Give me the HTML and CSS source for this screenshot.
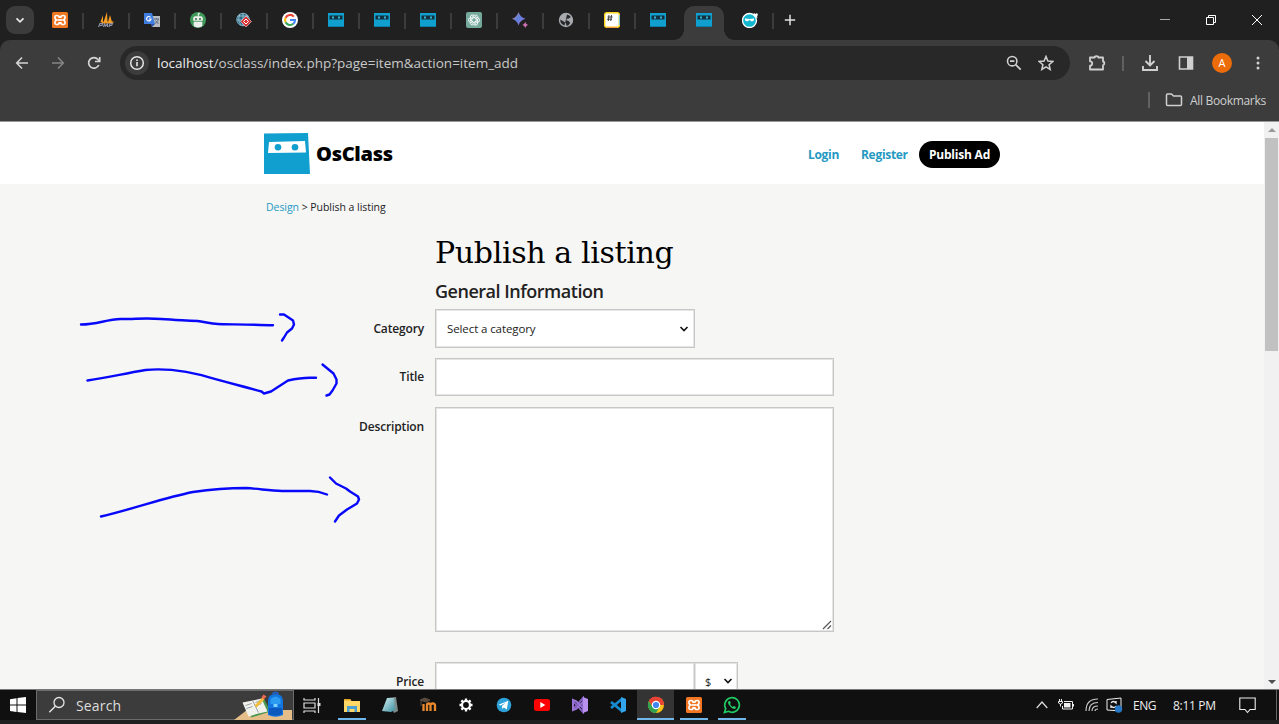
FILE: index.html
```
<!DOCTYPE html>
<html lang="en">
<head>
<meta charset="utf-8">
<title>Publish a listing - OsClass</title>
<link rel="stylesheet" href="styles.css">
</head>
<body>
<svg class="defs" aria-hidden="true">
  <defs>
    <linearGradient id="spark" x1="0" y1="0" x2="1" y2="1"><stop offset="0" stop-color="#e8798a"/><stop offset=".45" stop-color="#5b83e0"/><stop offset="1" stop-color="#a56bd0"/></linearGradient>
    <linearGradient id="note" x1="0" y1="0" x2="1" y2="1"><stop offset="0" stop-color="#d5f1f4"/><stop offset="1" stop-color="#3c8fa0"/></linearGradient>
    <symbol id="os" viewBox="0 0 16 16"><path fill="#10a0cf" d="M0 1h16v14H0z"/><path fill="#12303d" d="M1.500 3.500h13v4h-13z"/><path fill="#0b7ea6" d="M0 14h16v1H0z"/><path fill="#39b3d8" d="M4 4.500h2v2H4zM10 4.500h2v2h-2z"/></symbol>
    <symbol id="xampp" viewBox="0 0 16 16"><rect width="16" height="16" rx="1.500" fill="#f37623"/><path d="M4.800 3.500Q2.500 3.500 3 6q.2 1.300 1.500 2Q3.200 8.700 3 10q-.5 2.500 1.800 2.500 2.200 0 2.400-1.700h1.600q.2 1.700 2.400 1.700 2.300 0 1.800-2.500-.2-1.300-1.500-2Q12.800 7.300 13 6q.5-2.500-1.800-2.500Q9 3.500 8.800 5.200H7.200Q7 3.500 4.800 3.500z" fill="none" stroke="#fff" stroke-width="1.700"/><path d="M5.500 8h5" stroke="#fff" stroke-width="1.700"/></symbol>
  </defs>
</svg>

<header class="browser">
  <div class="tabstrip">
    <button class="tab-search"><svg width="16" height="16" viewBox="0 0 16 16"><path d="M4.500 6.300 8 9.800l3.500-3.500" fill="none" stroke="#e8e8e8" stroke-width="1.700"/></svg></button>
    <div class="tabs">
      <span class="tab"><svg><use href="#xampp"/></svg></span>
      <span class="tab"><svg viewBox="0 0 16 16"><path fill="#f59b23" d="M2.500 10 5 3v7zM5.500 10l3.500-10 .5 10zM10 10l2-7 2 7zM1 11.500l5-2H16l-2 2z"/><path d="m.5 15 1.500-3.500h2.500l-.5 2H2m3.500 1.500 1-3 1 2 2-2v3m1.500 0 1-3.500h2.500l-1 2H12" fill="none" stroke="#8d91a8" stroke-width="1.200"/></svg></span>
      <span class="tab"><svg viewBox="0 0 16 16"><path fill="#b9bdc2" d="M6 4h10v11H8z"/><path d="M10 7h5m-2.500-1v1m2 0c-.5 2-2 3.500-3.500 4.500m.5-3 3 3.500" stroke="#596a82" fill="none"/><path fill="#3f7de0" d="M0 1h8l3 11H0z"/><path fill="#2851a5" d="M7 12h4l-3 3z"/><path d="M6.500 5.300a2.200 2.200 0 1 0 .5 1.700H5" stroke="#fff" stroke-width="1.200" fill="none"/></svg></span>
      <span class="tab"><svg viewBox="0 0 16 16"><circle cx="8" cy="8" r="8" fill="#3f9958"/><path d="M8 5V1.500l2-.5M3.500 8.500V6q0-1.500 2-1.500h5q2 0 2 1.500v2.500zM4 10h8v4q-4 2.500-8 0z" fill="#eee" stroke="#eee" stroke-width=".6"/><circle cx="6" cy="7" r="1" fill="#286c3a"/><circle cx="10" cy="7" r="1" fill="#286c3a"/></svg></span>
      <span class="tab"><svg viewBox="0 0 16 16"><circle cx="7" cy="7.500" r="6.300" fill="#286985" stroke="#76a8bd"/><path d="M2 4h10M1 8h12M7 1v13M4 2q-3 6 1 11m5-11q3 3 1 7" stroke="#a9cbd7" fill="none" stroke-width=".8"/><path d="m10 4 5.500 5.500L10 15 4.500 9.500z" fill="#d63236" stroke="#fff" stroke-width=".5"/><path d="m10 7 2.500 2.500L10 12 7.500 9.500z" fill="none" stroke="#fff"/></svg></span>
      <span class="tab"><svg viewBox="0 0 16 16"><circle cx="8" cy="8" r="8" fill="#fff"/><g fill="none" stroke-width="2.100"><path d="M11.800 4.600A5 5 0 0 0 3.600 5.700" stroke="#ea4335"/><path d="M3.600 5.700a5 5 0 0 0 0 4.600" stroke="#fbbc05"/><path d="M3.600 10.300a5 5 0 0 0 7.700 1.500" stroke="#34a853"/><path d="M11.300 11.800A5 5 0 0 0 13 8H8" stroke="#4285f4"/></g></svg></span>
      <span class="tab"><svg><use href="#os"/></svg></span>
      <span class="tab"><svg><use href="#os"/></svg></span>
      <span class="tab"><svg><use href="#os"/></svg></span>
      <span class="tab"><svg viewBox="0 0 16 16"><rect width="16" height="16" rx="2" fill="#75a99c"/><g fill="none" stroke="#fff" stroke-width=".9"><path id="petal" d="M5.800 9.300V5.200L8.600 3.400a2.200 2.200 0 0 1 3.300 2.200"/><use href="#petal" transform="rotate(60 8 8)"/><use href="#petal" transform="rotate(120 8 8)"/><use href="#petal" transform="rotate(180 8 8)"/><use href="#petal" transform="rotate(240 8 8)"/><use href="#petal" transform="rotate(300 8 8)"/></g></svg></span>
      <span class="tab"><svg viewBox="0 0 16 16"><path fill="url(#spark)" d="M6.500 0Q8 5.300 13.500 6.800 8 8.200 6.500 13.500 5 8.200 0 6.800 5 5.300 6.500 0z"/><path fill="#cf72b5" d="M13.300 10q.6 2.200 2.700 3-2.100.7-2.700 3-.7-2.300-2.800-3 2.100-.8 2.800-3z"/></svg></span>
      <span class="tab"><svg viewBox="0 0 16 16"><circle cx="8" cy="8" r="7.200" fill="#a7abb0"/><path d="M9 2.500q3 .5 3.800 2.500l-2 1.500-2 .2-.6 1.600 2.500.7 1.500 2-2 2.500-1.700.3-.5-2.300L6 9.800 2.300 7.500q-.3 4.500 4.200 6" fill="#25272a"/></svg></span>
      <span class="tab"><svg viewBox="0 0 16 16"><rect x=".7" y=".7" width="14.600" height="14.600" rx="2" fill="#fff" stroke="#ffd51f" stroke-width="1.400"/><path d="M15.400 3v10" stroke="#67c7ee"/><path d="M3 15.400h10" stroke="#fa9446"/><path d="m5 3-.7 6M7.500 3l-.7 6M3.500 5h5M3 7.200h5" stroke="#333" stroke-width=".9"/></svg></span>
      <span class="tab before-active"><svg><use href="#os"/></svg></span>
      <span class="tab active"><i class="tab-shape"></i><svg><use href="#os"/></svg></span>
      <span class="tab"><svg viewBox="0 0 16 16"><circle cx="7.500" cy="8.500" r="7" fill="#14b8ce" stroke="#fff" stroke-width="1.300"/><path d="m11 3 1-2 1.500 1L15 1l1 2-1 1 .5 2-2-.5z" fill="#fff"/><path d="M3 6.500q4.500.8 9 0v1.700q-1.500 1.700-3 .8l-1.500-1L6 9q-1.500.9-3-.8z" fill="#fff"/></svg></span>
    </div>
    <button class="new-tab"><svg width="12" height="12" viewBox="0 0 12 12"><path d="M6 .8v10.400M.8 6h10.400" stroke="#e0e0e0" stroke-width="1.500"/></svg></button>
    <div class="window-buttons">
      <svg viewBox="0 0 12 12"><path d="M1 5.500h10" stroke="#aaa"/></svg>
      <svg viewBox="0 0 12 12"><path d="M1.500 3.500h7v7h-7zM3.500 3V1.500h7v7H9" fill="none" stroke="#fff"/></svg>
      <svg viewBox="0 0 12 12"><path d="m1 1 10 10M11 1 1 11" stroke="#fff"/></svg>
    </div>
  </div>

  <div class="toolbar">
    <nav class="nav">
      <svg viewBox="0 0 16 16"><path d="M14 8H3m5-5.500L2.700 8 8 13.500" fill="none" stroke="#d5d5d5" stroke-width="1.600"/></svg>
      <svg viewBox="0 0 16 16"><path d="M2 8h11M8 2.500 13.300 8 8 13.500" fill="none" stroke="#858585" stroke-width="1.600"/></svg>
      <svg viewBox="0 0 16 16"><path d="M12.800 10A5.300 5.300 0 1 1 12 4.500L13.500 6M13.700 2v4.500H9" fill="none" stroke="#d5d5d5" stroke-width="1.700"/></svg>
    </nav>
    <div class="omnibox">
      <span class="site-info"><svg width="16" height="16" viewBox="0 0 16 16"><circle cx="8" cy="8" r="6.300" fill="none" stroke="#e5e5e5" stroke-width="1.500"/><path d="M8 7v4.300M8 4.500V6" stroke="#e5e5e5" stroke-width="1.600"/></svg></span>
      <span class="url"><b>localhost</b>/osclass/index.php?page=item&amp;action=item_add</span>
      <svg class="lens" viewBox="0 0 16 16"><circle cx="6.200" cy="6.200" r="4.700" fill="none" stroke="#d0d0d0" stroke-width="1.600"/><path d="m9.700 9.700 5 5M4 6.200h4.400" stroke="#d0d0d0" stroke-width="1.700"/></svg>
      <svg class="star" viewBox="0 0 16 16"><path d="m8 1.500 1.900 4.600 4.900.4-3.700 3.200 1.100 4.800L8 11.900l-4.200 2.600 1.100-4.800L1.200 6.500l4.900-.4z" fill="none" stroke="#d0d0d0" stroke-width="1.500"/></svg>
    </div>
    <div class="actions">
      <svg class="ext" viewBox="0 0 18 18"><path d="M2 3.500h4.700a1.800 1.300 0 0 1 3.600 0H15v4a1.300 1.800 0 0 1 0 3.600v4.400H2v-3.800a2.200 2.200 0 0 0 0-4.400z" fill="none" stroke="#d0d0d0" stroke-width="1.800" stroke-linejoin="round"/></svg>
      <i></i>
      <svg class="down" viewBox="0 0 18 18"><path d="M9 1v10M4.500 7 9 11.500 13.500 7M2 12v4h14v-4" fill="none" stroke="#d0d0d0" stroke-width="1.900"/></svg>
      <svg class="panel" viewBox="0 0 16 16"><path d="M1.500 2h13v12h-13z" fill="none" stroke="#d0d0d0" stroke-width="1.600"/><path d="M9 2h5v12H9z" fill="#d0d0d0"/></svg>
      <span class="avatar">A</span>
      <svg class="dots" viewBox="0 0 4 16"><g fill="#d0d0d0"><circle cx="2" cy="3" r="1.500"/><circle cx="2" cy="8" r="1.500"/><circle cx="2" cy="13" r="1.500"/></g></svg>
    </div>
  </div>
  <div class="bookmarks"><i></i><svg width="18" height="14" viewBox="0 0 18 14"><path d="M1.500 2q0-1 1-1h4l2 2h7q1 0 1 1v7.500q0 1-1 1h-13q-1 0-1-1z" fill="none" stroke="#cfcfcf" stroke-width="1.500"/></svg><span>All Bookmarks</span></div>
</header>

<main class="viewport">
  <div class="page">
    <header class="site-header">
      <svg width="46" height="41" viewBox="0 0 46 41"><path d="m0 .5 44-.5 2 41H0z" fill="#109fcf"/><path d="m5 9 36-1 1 11.500-38 .5z" fill="#fff"/><circle cx="14" cy="14.300" r="3.300" fill="#109fcf"/><circle cx="31" cy="14.300" r="3.300" fill="#109fcf"/></svg>
      <span class="brand">OsClass</span>
      <nav class="site-nav"><a class="login">Login</a><a class="register">Register</a><a class="publish"><span>Publish Ad</span></a></nav>
    </header>
    <div class="breadcrumb"><a>Design</a> &gt; Publish a listing</div>
    <form class="listing">
      <h1><span>Publish a listing</span></h1>
      <h2><span>General Information</span></h2>
      <div class="row category"><label>Category</label><div class="field select"><span>Select a category</span><svg width="10" height="6" viewBox="0 0 10 6"><path d="m1.500 1 3.500 3.500L8.500 1" fill="none" stroke="#111" stroke-width="1.600"/></svg></div></div>
      <div class="row title"><label>Title</label><div class="field input"></div></div>
      <div class="row description"><label>Description</label><div class="field textarea"><svg width="10" height="10" viewBox="0 0 10 10"><path d="M1 9 9 1M5.500 9 9 5.500" stroke="#555" stroke-width="1.100"/></svg></div></div>
      <div class="row price"><label>Price</label><div class="field amount"></div><div class="field currency"><span>$</span><svg width="10" height="6" viewBox="0 0 10 6"><path d="m1.500 1 3.500 3.500L8.500 1" fill="none" stroke="#111" stroke-width="1.600"/></svg></div></div>
    </form>
    <svg class="ink" viewBox="0 0 400 250"><g fill="none" stroke="#0808fa" stroke-width="2.400" stroke-linecap="round" stroke-linejoin="round">
      <path d="M81 24.500c17 0 24-5 40-5.500 16 0 25-1.300 40 0 13 1 18 1 37 2 10 2 17 3.500 25 3.300 15 .2 35 .2 50 1"/>
      <path d="M280 14.500h4l6 4 3 2 1 4-2 4-5 4-3 5-2 3"/>
      <path d="M87.500 80.500c22-3 34-6.500 58-10.500 9-1 17-.8 26-.1 11 1 21 3 30 5.300 20 6 41 11 60 16.300l2.500 2 7-2 17-11c9-2 14-3 24-2.700h4"/>
      <path d="m322.500 64.500 11 9 3 6v4l-4 7-3 4-3 1"/>
      <path d="M101 216.500c34-8 64-19 92-24.500 17-2.500 33-4 53-4 14 1 24 2.500 36 3h28c7 0 11 1 17 3.500"/>
      <path d="m330 177.500 6 6 10 5 4 3 8 5 1 3-2 4-10 6-8 6-4 6"/>
    </g></svg>
  </div>
  <aside class="scrollbar"><i class="arrow up"></i><i class="thumb"></i><i class="arrow down-arrow"></i></aside>
</main>

<footer class="taskbar">
  <span class="start"><svg width="16" height="16" viewBox="0 0 16 16"><path fill="#fff" d="m0 2.200 6.500-1V7.500H0zM7.500 1 16 0v7.500H7.500zM0 8.500h6.500v6.400L0 14zM7.500 8.500H16V16l-8.500-1.100z"/></svg></span>
  <div class="search"><svg width="18" height="18" viewBox="0 0 18 18"><circle cx="11" cy="6.500" r="5" fill="none" stroke="#e5e5e5" stroke-width="1.300"/><path d="m7.300 10.300-6 6" stroke="#e5e5e5" stroke-width="1.400"/></svg><span>Search</span>
    <svg class="art" width="60" height="29" viewBox="0 0 60 29"><path d="M1 29 14 19h45v10z" fill="#e5bd89"/><g transform="translate(1.500 .5)"><path d="m12 13 18-5 6 12-19 6z" fill="#4b9651"/><path d="m8 11 10-2 9-2 6 13-9 2-10 3z" fill="#f2f2ec"/><path d="m18 9 6 12M11 14l6-2m-5 5 6-2m3-4 5-2m-4 5 5-2" stroke="#9aa1aa" fill="none"/><path d="m20 14 8-8 2 2-8 8z" fill="#f2bc35"/><path d="m27 6 2-3 3 2-3 3z" fill="#ef6b51"/></g><g transform="translate(1.500 1)"><path d="M38 2q3-3 6 0" fill="none" stroke="#235fc5" stroke-width="2"/><path d="M33.500 9q0-7 7.500-7t7.500 7v14q-7.500 3.500-15 0z" fill="#1375df"/><path d="M36 7q5-5 10 0v5H36z" fill="#2c9bf2"/><path d="M34.500 16h13v6q-6.500 3-13 0z" fill="#0c58bd"/><path d="M39 12h4v3h-4z" fill="#7bd1ff"/></g></svg>
  </div>
  <span class="taskview"><svg width="18" height="17" viewBox="0 0 18 17"><path d="M1 1v2h11V1M1 6h11v5H1zM1 16v-2h11v2M15.500 1v15" fill="none" stroke="#ddd" stroke-width="1.200"/><path d="M14.500 6h3v3h-3z" fill="#ddd"/></svg></span>
  <div class="apps">
    <span class="app open"><svg viewBox="0 0 18 18"><path d="M1 3h6l1.500 2H17v11H1z" fill="#ffd766"/><path d="M1 3h6l1 1.500H1z" fill="#e6a323"/><path d="M4 16v-6h10v6h-2.500v-3h-5v3z" fill="#4b9fd2"/></svg></span>
    <span class="app"><svg viewBox="0 0 18 18"><path d="m6 2 9-1 2 14-4 2z" fill="#7d8c8b"/><path d="m6 2 7 0 1 12-4 2-9-1z" fill="url(#note)"/></svg></span>
    <span class="app"><svg viewBox="0 0 18 18"><path d="m1 4 5-2 5 2-4 2zM2 5v5" fill="#594a3e" stroke="#594a3e"/><path d="M4.500 15V8M8 15V9q0-1.500 1.700-1.500T11.500 9v6m0-6q0-1.500 2.300-1.500T16 9.500V15" fill="none" stroke="#e9882c" stroke-width="2.300"/></svg></span>
    <span class="app"><svg viewBox="0 0 18 18"><circle cx="9" cy="9" r="4" fill="none" stroke="#fff" stroke-width="2.200"/><path d="M9 2.500V5m0 8v2.500M2.500 9H5m8 0h2.500M4.400 4.400l1.800 1.800m5.600 5.600 1.800 1.800m0-9.200-1.800 1.800m-5.600 5.600-1.800 1.800" stroke="#fff" stroke-width="2.300"/></svg></span>
    <span class="app"><svg viewBox="0 0 18 18"><circle cx="9" cy="9" r="7.300" fill="#2ba1d8"/><path d="m3.500 8.800 9.800-4-1.500 8.700-3-2-1.500 1.400-.4-2.800 4-3.500-5.200 3z" fill="#fff"/></svg></span>
    <span class="app"><svg viewBox="0 0 18 18"><rect x="1" y="3" width="16" height="12" rx="2.500" fill="#f00"/><path d="m7.300 6 5 3-5 3z" fill="#fff"/></svg></span>
    <span class="app"><svg viewBox="0 0 18 18"><path d="M2 5v8l3-3 7-8v14L2 5z" fill="none" stroke="#8661c5" stroke-width="2"/><path d="m12 1 5 2v12l-5 2z" fill="#b990ee"/><path d="m12 12-7-7-3-1v10l3-1 7-7" fill="none" stroke="#9974d6" stroke-width="2"/></svg></span>
    <span class="app"><svg viewBox="0 0 18 18"><path d="m2 6 11 9M2 12l11-9" stroke="#168bd1" stroke-width="2.800"/><path d="m12 1 5 2v12l-5 2z" fill="#32a6ed"/></svg></span>
    <span class="app open selected"><svg viewBox="0 0 18 18"><circle cx="9" cy="9" r="8" fill="#fbc116"/><path d="M9 9H17A8 8 0 0 0 2 5z" fill="#e54335"/><path d="M9 9 5.500 11 2 5A8 8 0 0 0 9 17l3.500-6z" fill="#31a350"/><path d="M9 5h7A8 8 0 0 0 2 5l3.500 6z" fill="#e54335"/><circle cx="9" cy="9" r="3.700" fill="#4285f4" stroke="#fff" stroke-width="1.200"/></svg></span>
    <span class="app open"><svg class="small"><use href="#xampp"/></svg></span>
    <span class="app open"><svg viewBox="0 0 18 18"><path d="m1.500 16.500 1.200-4A7.300 7.300 0 1 1 5.500 15.300z" fill="none" stroke="#22cc64" stroke-width="1.700"/><path d="M6 5q-2 1 0 4t5 4q2 0 2-2l-2.200-1.100-1 1Q8 10 7 8l.8-1L7 5z" fill="#22cc64"/></svg></span>
  </div>
  <div class="tray">
    <svg class="chev" viewBox="0 0 12 8"><path d="m.7 7 5.300-6 5.300 6" fill="none" stroke="#ddd" stroke-width="1.200"/></svg>
    <svg class="battery" viewBox="0 0 16 12"><path d="M6 2.500h8.500V10H4.500V7M15.500 5v2.500" fill="none" stroke="#eee"/><path d="M6 4h6.500v4.500H6z" fill="#eee"/><path d="M1.500 0v2M3.500 0v2M.5 2.500h4V4q-2 2.500-4 0zM2.500 5v2.500" fill="none" stroke="#eee"/></svg>
    <svg class="wifi" viewBox="0 0 14 14"><g fill="none" stroke="#ccc" stroke-width="1.100"><path d="M1 13Q1 1 13 1M4 13q0-8.500 9-8.500M7 13q0-5 6-5M10 13q0-2 3-2"/></g></svg>
    <svg class="cast" viewBox="0 0 17 16"><path d="M1 2.500 15 1v13L1 13z" fill="none" stroke="#eee"/><path d="M5 6q2-3 5 0V4m0 5q-2 3-5 0v2" fill="none" stroke="#eee" stroke-width="1.300"/><circle cx="12.500" cy="12" r="3.700" fill="#2878c8"/></svg>
    <span class="lang">ENG</span><span class="clock">8:11 PM</span>
    <svg class="notice" viewBox="0 0 17 17"><path d="M.8 1h15.400v11.500H11L8.500 15.500 6 12.500H.8z" fill="none" stroke="#eee" stroke-width="1.100"/></svg>
    <i class="desktop"></i>
  </div>
</footer>
</body>
</html>
```
FILE: styles.css
```
* { box-sizing: border-box; }
body { margin: 0; width: 1279px; height: 724px; overflow: hidden; display: flex; flex-direction: column; background: #202020; color: #222; font-family: "Open Sans", "Noto Sans", sans-serif; }
svg { display: block; flex: none; }
button { border: 0; padding: 0; background: none; }
.defs { position: absolute; width: 0; height: 0; }
a, span, label { white-space: nowrap; }

.browser { height: 122px; flex: none; border-bottom: 1px solid #999; background: #202020; }
.tabstrip { height: 40px; display: flex; align-items: center; padding-left: 6px; }
.tab-search { width: 28px; height: 28px; border-radius: 9px; background: #3c3c3c; display: grid; place-items: center; }
.tabs { display: flex; margin-left: 3px; height: 40px; }
.tab { position: relative; width: 46px; height: 40px; display: grid; place-items: center; }
.tab > svg { width: 16px; height: 16px; position: relative; }
.tab::after { content: ""; position: absolute; right: -1px; top: 13px; width: 2px; height: 16px; background: #3c3c3c; }
.before-active::after, .active::after { display: none; }
.tab-shape { position: absolute; left: 3px; top: 6px; width: 40px; height: 34px; border-radius: 10px 10px 0 0; background: #3c3c3c; }
.tab-shape::before, .tab-shape::after { content: ""; position: absolute; bottom: 0; width: 10px; height: 10px; }
.tab-shape::before { left: -10px; background: radial-gradient(circle at 0 0, transparent 9.500px, #3c3c3c 10px); }
.tab-shape::after { right: -10px; background: radial-gradient(circle at 100% 0, transparent 9.500px, #3c3c3c 10px); }
.new-tab { margin-left: 11px; }
.window-buttons { margin-left: auto; margin-right: 16px; display: flex; gap: 34px; }
.window-buttons svg { width: 12px; height: 12px; }
.toolbar { height: 40px; padding-top: 6px; display: flex; background: #3c3c3c; border-radius: 10px 10px 0 0; }
.nav { width: 120px; height: 34px; padding-left: 14px; display: flex; align-items: center; gap: 20px; }
.nav svg { width: 16px; height: 16px; }
.omnibox { width: 950px; height: 34px; border-radius: 17px; background: #282828; display: flex; align-items: center; padding: 0 16px 0 5px; color: #c8c8c8; }
.site-info { width: 24px; height: 24px; border-radius: 50%; background: #3c3c3c; display: grid; place-items: center; }
.url { margin-left: 8px; font-size: 13.500px; }
.url b { color: #ececec; font-weight: 400; }
.lens { width: 16px; height: 16px; margin-left: auto; }
.star { width: 16px; height: 16px; margin-left: 16px; }
.actions { flex: 1; height: 34px; display: flex; align-items: center; padding-left: 18px; }
.ext, .down { width: 18px; height: 18px; }
.actions i { width: 2px; height: 15px; margin-left: 16px; background: #606060; }
.down { margin-left: 17px; }
.panel { width: 16px; height: 16px; margin-left: 19px; }
.avatar { width: 20px; height: 20px; margin-left: 18px; border-radius: 50%; background: #ec6c09; color: #fff; font-size: 11px; line-height: 20px; text-align: center; }
.dots { width: 4px; height: 16px; margin-left: 24px; }
.bookmarks { height: 41px; background: #3c3c3c; display: flex; align-items: center; padding: 0 0 1px 1148px; color: #cfcfcf; font-size: 12px; }
.bookmarks i { width: 2px; height: 16px; background: #626262; }
.bookmarks svg { margin-left: 15px; }
.bookmarks span { margin-left: 7px; letter-spacing: -.32px; }

.viewport { height: 567px; flex: none; display: flex; }
.page { position: relative; width: 1264px; height: 567px; overflow: hidden; background: #f6f6f5; }
.site-header { height: 63px; background: #fff; display: flex; align-items: center; padding-left: 264px; border-bottom: 1px solid #f6f6f6; }
.brand { width: 78px; margin-left: 6px; color: #000; font-size: 20px; font-weight: 800; letter-spacing: -.3px; }
.site-nav { margin-left: 414px; height: 27px; margin-top: 3px; display: flex; align-items: center; font-size: 12px; font-weight: 700; letter-spacing: -.3px; color: #2599c2; }
.login { width: 53px; }
.register { width: 58px; }
.publish { width: 81px; height: 27px; border-radius: 14px; background: #000; color: #fff; line-height: 27px; text-align: center; letter-spacing: -.2px; }
.breadcrumb { height: 45px; padding: 14px 0 0 266px; font-size: 10.500px; line-height: 16px; letter-spacing: -.05px; white-space: nowrap; }
.breadcrumb a { color: #2599c2; }
.listing { width: 840px; }
h1, h2 { margin: 0 0 0 435px; font-weight: 400; }
h1 { height: 48px; padding-top: 1px; font: 400 30px/43px "DejaVu Serif", serif; letter-spacing: -.35px; color: #000; }
h2 { height: 31px; font-size: 18px; line-height: 26px; font-weight: 600; letter-spacing: -.48px; }
.row { display: grid; grid-template-columns: 424px auto; column-gap: 11px; justify-content: start; }
label { text-align: right; font-size: 12px; line-height: 39px; font-weight: 600; letter-spacing: -.15px; }
.field { height: 39px; background: #fff; border: 1px solid #c7c7c7; box-shadow: inset 0 0 0 1px #e5e5e5; }
.select { width: 260px; display: flex; align-items: center; justify-content: space-between; padding: 0 5px 0 11px; font-size: 11.500px; letter-spacing: -.1px; }
.title { margin-top: 10px; }
.title label { line-height: 38px; }
.input { width: 399px; height: 38px; }
.description { margin-top: 11px; }
.textarea { width: 399px; height: 225px; display: flex; align-items: flex-end; justify-content: flex-end; padding: 1px; }
.price { margin-top: 30px; grid-template-columns: 424px 260px 43px; }
.currency { margin-left: -12px; width: 44px; display: flex; align-items: center; justify-content: space-between; padding: 0 4px 1px 10px; font-size: 11px; }
.ink { position: absolute; left: 0; top: 178px; width: 400px; height: 250px; }
.scrollbar { width: 15px; background: #f1f1f1; display: flex; flex-direction: column; align-items: center; }
.thumb { width: 13px; height: 213px; margin-top: 6px; background: #c1c1c1; }
.arrow { border: 4px solid transparent; }
.up { border-top: 0; border-bottom: 4px solid #999; margin-top: 6px; }
.down-arrow { border-bottom: 0; border-top: 4px solid #505050; margin-top: auto; margin-bottom: 5px; }

.taskbar { height: 35px; flex: none; display: flex; background: #101010; border-top: 1px solid #777; border-bottom: 4px solid #202020; color: #eee; }
.start { width: 36px; display: grid; place-items: center; }
.search { position: relative; width: 258px; background: #3c3c3c; border: 1px solid #6b6b6b; display: flex; align-items: center; padding-left: 11px; font-size: 14px; color: #ddd; }
.search span { margin-left: 10px; letter-spacing: .15px; }
.art { margin-left: auto; }
.taskview { width: 38.500px; padding-left: 9px; display: grid; align-items: center; }
.apps { display: flex; }
.app { width: 38px; height: 30px; display: grid; place-items: center; position: relative; }
.app svg { width: 18px; height: 18px; }
.app svg.small { width: 16px; height: 16px; }
.open::after { content: ""; position: absolute; left: 5px; bottom: 0; width: 28px; height: 2px; background: #72b7eb; }
.selected { background: linear-gradient(#343434, #343434) center / 37px 100% no-repeat; }
.selected.open::after { left: 0; width: 37px; }
.tray { margin-left: auto; height: 30px; display: flex; align-items: center; font-size: 12px; }
.chev { width: 12px; height: 8px; margin-right: 10px; }
.battery { width: 16px; height: 12px; margin-right: 11px; }
.wifi { width: 14px; height: 14px; margin-right: 7px; }
.cast { width: 17px; height: 16px; margin-right: 10px; }
.lang { width: 40px; letter-spacing: -.5px; }
.clock { width: 66px; letter-spacing: -.3px; }
.notice { width: 17px; height: 17px; margin-right: 20px; }
.desktop { width: 3px; height: 30px; border-left: 1px solid #666; }
```
